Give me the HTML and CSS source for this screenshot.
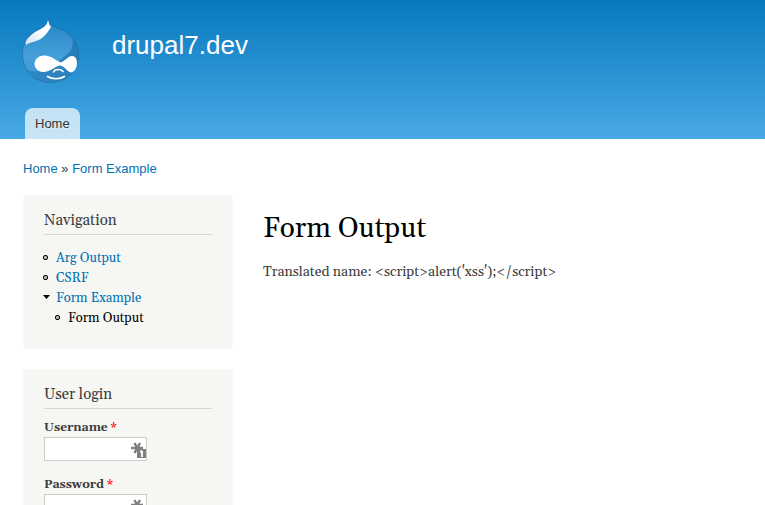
FILE: index.html
```html
<!DOCTYPE html>
<html lang="en">
<head>
<meta charset="utf-8">
<title>Form Output | drupal7.dev</title>
<link rel="stylesheet" href="styles.css">
</head>
<body>
<header class="header">
  <div class="branding">
    <a class="logo" href="#" aria-label="Home">
      <svg width="60" height="66" viewBox="0 0 60 66" aria-hidden="true">
        <defs>
          <linearGradient id="drop" x1="0" y1="0" x2="0" y2="1">
            <stop offset="0" stop-color="#2384c4"/>
            <stop offset=".6" stop-color="#46a0d9"/>
            <stop offset="1" stop-color="#3a94ce"/>
          </linearGradient>
          <linearGradient id="shade" x1="1" y1="0" x2="0" y2="1">
            <stop offset="0" stop-color="#1c70ab" stop-opacity=".8"/>
            <stop offset="1" stop-color="#1c70ab" stop-opacity=".35"/>
          </linearGradient>
          <linearGradient id="shine" x1="1" y1="0" x2="0" y2="1">
            <stop offset=".4" stop-color="#fff"/>
            <stop offset="1" stop-color="#fff" stop-opacity=".75"/>
          </linearGradient>
          <path id="outline" d="M28 1.5C29.500 7 34 8.500 41 11.500C52 16 58.500 26 58.500 37C58.500 53 46 64.500 30.500 64.500C14 64.500 2.500 52 2.500 36C2.500 25 8 17 16 12.500C22 9 27 7.500 28 1.500Z"/>
          <clipPath id="shape"><use href="#outline"/></clipPath>
        </defs>
        <g clip-path="url(#shape)">
          <rect width="60" height="66" fill="url(#drop)"/>
          <path d="M51 16C55 26 52 33 45 38C38 43 34 50 22 53C15 54 8 53 4 50L8 66H60V20Z" fill="url(#shade)"/>
        </g>
        <use href="#outline" fill="none" stroke="#20699c" stroke-opacity=".6"/>
        <path d="M28 2C29 5 29 7 31 9C29 12 27 16 22 20C17 24 11 23.500 6 27C4 23 10 17 17 13C23 10 27 8 28 2Z" fill="url(#shine)"/>
        <path d="M24 37.500C32 37.500 36 43 41 44.500C45 43 48 38 52 38C56 38 57 42 57 45C57 49 55 54 51 54.500C47 54 45 48 40 47.500C35 48 31 54 23 54C18 54 14.500 50 14.500 46C14.500 41 19 37.500 24 37.500Z" fill="#fff"/>
        <path d="M33.500 54C35 51 41 50.500 43 53.500M27.500 58.500C32 61.500 40 61.500 44.500 58.500" fill="none" stroke="#fff" stroke-width="1.600" stroke-linecap="round"/>
      </svg>
    </a>
    <a class="site-name" href="#">drupal7.dev</a>
  </div>
  <nav class="tabs"><a class="tab" href="#">Home</a></nav>
</header>
<nav class="breadcrumb" aria-label="Breadcrumb"><a href="#">Home</a> » <a href="#">Form Example</a></nav>
<div class="columns">
  <aside class="sidebar">
    <section class="block">
      <h2>Navigation</h2>
      <ul class="menu">
        <li class="leaf"><a href="#">Arg Output</a></li>
        <li class="leaf"><a href="#">CSRF</a></li>
        <li class="expanded"><a href="#">Form Example</a>
          <ul class="menu submenu">
            <li class="leaf"><a class="active" href="#">Form Output</a></li>
          </ul>
        </li>
      </ul>
    </section>
    <section class="block">
      <h2>User login</h2>
      <form class="login">
        <div class="field">
          <label for="name">Username <span class="required">*</span></label>
          <div class="control">
            <input id="name" type="text">
            <svg class="key" width="16" height="16" viewBox="0 0 16 16" aria-hidden="true">
              <path d="M3.500 1L9 11M9 1L3.500 11M0 6H12" fill="none" stroke="#808080" stroke-width="2.5"/>
              <rect x="6" y="7" width="9" height="9" fill="#808080"/>
              <path d="M9 9.500H11V15" fill="none" stroke="#fff" stroke-width="1.800"/>
            </svg>
          </div>
        </div>
        <div class="field">
          <label for="pass">Password <span class="required">*</span></label>
          <div class="control">
            <input id="pass" type="password">
            <svg class="key" width="16" height="16" viewBox="0 0 16 16" aria-hidden="true">
              <path d="M3.500 1L9 11M9 1L3.500 11M0 6H12" fill="none" stroke="#808080" stroke-width="2.5"/>
              <rect x="6" y="7" width="9" height="9" fill="#808080"/>
              <path d="M9 9.500H11V15" fill="none" stroke="#fff" stroke-width="1.800"/>
            </svg>
          </div>
        </div>
      </form>
    </section>
  </aside>
  <main class="content">
    <h1>Form Output</h1>
    <p>Translated name: &lt;script&gt;alert('xss');&lt;/script&gt;</p>
  </main>
</div>
</body>
</html>
```
FILE: styles.css
```css
*,
*::before {
  box-sizing: border-box;
}

body {
  margin: 0;
  background: #fff;
  color: #3b3b3b;
  font-family: Georgia, Gelasio, "Liberation Serif", serif;
  font-size: 14px;
  line-height: 20px;
}

a {
  color: #0071b3;
  text-decoration: none;
}

.header {
  padding: 18px 20px 0;
  background: linear-gradient(#0779bf, #48a9e4);
}

.branding {
  display: flex;
  gap: 32px;
}

.logo svg {
  display: block;
}

.site-name {
  padding-top: 11px;
  color: #fffeff;
  font: 26px/32px "Liberation Sans", sans-serif;
}

.tabs {
  display: flex;
  margin-top: 24px;
  padding-left: 5px;
}

.tab {
  padding: 0 10px;
  border-radius: 8px 8px 0 0;
  background: rgba(255, 255, 255, 0.7);
  color: #333;
  font: 13px/31px "Liberation Sans", sans-serif;
  text-shadow: 0 1px #eee;
}

.breadcrumb {
  padding: 20px 23px 0;
  font-family: "Liberation Sans", sans-serif;
  font-size: 13px;
}

.columns {
  display: grid;
  grid-template-columns: 210px 1fr;
  gap: 30px;
  padding: 16px 23px 0;
}

.block {
  margin-bottom: 20px;
  padding: 15px 20px 20px;
  border: 1px solid #f9f9f9;
  background: #f6f6f2;
}

.block h2 {
  margin: 0;
  padding-bottom: 3px;
  border-bottom: 1px solid #d6d6d6;
  font-size: 15px;
  font-weight: normal;
}

.menu {
  margin: 13px 0 0;
  padding: 0 0 0 12px;
  font-size: 13px;
  list-style: none;
}

.submenu {
  margin: 0;
}

.menu li::before {
  display: inline-block;
  width: 5px;
  height: 5px;
  margin: 0 8px 2px -13px;
  border: 1px solid #000;
  border-radius: 2px;
  background: #bbb;
  content: "";
}

.menu .expanded::before {
  width: 7px;
  height: 4px;
  margin: 0 6px 3px -13px;
  border: 0;
  border-radius: 0;
  background: #000;
  clip-path: polygon(0 0, 100% 0, 50% 100%);
}

.menu .active {
  color: #000;
}

.login {
  margin-top: 9px;
}

.field {
  margin-bottom: 14px;
}

.field label {
  display: block;
  font-size: 12px;
  font-weight: bold;
  line-height: 19px;
}

.required {
  color: #f00;
}

.control {
  position: relative;
  width: 103px;
}

.control input {
  display: block;
  width: 100%;
  height: 24px;
  padding: 2px 18px 2px 2px;
  border: 1px solid #ccc;
  background: #fff;
}

.key {
  position: absolute;
  right: 0;
  bottom: 3px;
}

.content h1 {
  margin: 16px 0 15px;
  color: #000;
  font-size: 28px;
  font-weight: normal;
  line-height: 36px;
}

.content p {
  margin: 0;
}
```
